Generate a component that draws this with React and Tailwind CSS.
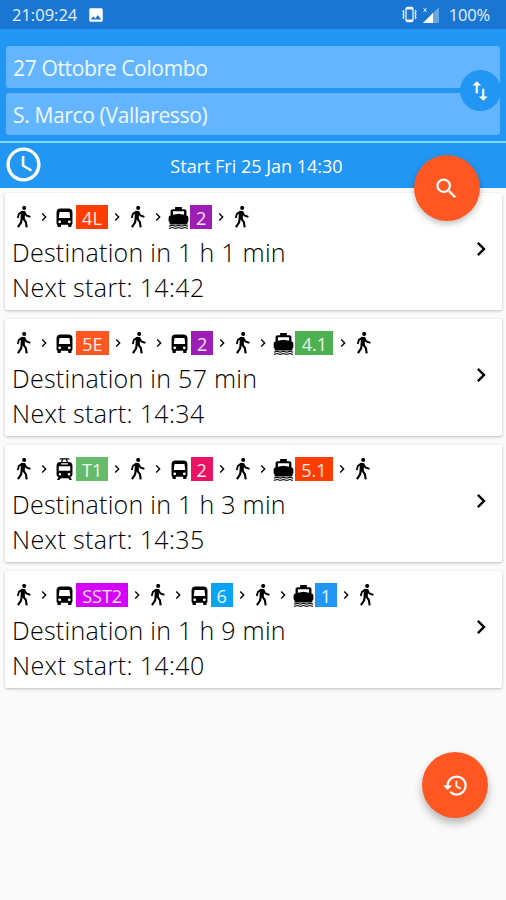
import React from "react";
import {
  MdAccessTime,
  MdChevronRight,
  MdHistory,
  MdImage,
  MdImportExport,
  MdSearch,
} from "react-icons/md";

const trips = [
  {
    duration: "1 h 1 min",
    start: "14:42",
    legs: [
      { type: "walk" },
      { type: "bus", line: "4L", style: "w-[31.5px] bg-[#ff3d00]" },
      { type: "walk" },
      { type: "boat", line: "2", style: "w-[22px] bg-[#9c1eb4]" },
      { type: "walk" },
    ],
  },
  {
    duration: "57 min",
    start: "14:34",
    legs: [
      { type: "walk" },
      { type: "bus", line: "5E", style: "w-[32.5px] bg-[#ff5722]" },
      { type: "walk" },
      { type: "bus", line: "2", style: "w-[22px] bg-[#9c1eb4]" },
      { type: "walk" },
      { type: "boat", line: "4.1", style: "w-[38px] bg-[#4caf50]" },
      { type: "walk" },
    ],
  },
  {
    duration: "1 h 3 min",
    start: "14:35",
    legs: [
      { type: "walk" },
      { type: "tram", line: "T1", style: "w-[32px] bg-[#66bb6a]" },
      { type: "walk" },
      { type: "bus", line: "2", style: "w-[22px] bg-[#e91263]" },
      { type: "walk" },
      { type: "boat", line: "5.1", style: "w-[38px] bg-[#ff3d00]" },
      { type: "walk" },
    ],
  },
  {
    duration: "1 h 9 min",
    start: "14:40",
    legs: [
      { type: "walk" },
      { type: "bus", line: "SST2", style: "w-[52px] bg-[#d500f9]" },
      { type: "walk" },
      { type: "bus", line: "6", style: "w-[22px] bg-[#08a5f2]" },
      { type: "walk" },
      { type: "boat", line: "1", style: "w-[22px] bg-[#2196f3]" },
      { type: "walk" },
    ],
  },
];

function WalkIcon({ className }) {
  return (
    <svg viewBox="0 0 24 24" className={className} fill="none" stroke="currentColor">
      <circle cx="12.7" cy="2" r="2.1" fill="currentColor" stroke="none" />
      <path d="M11.5 5.2 11.1 13.8" strokeWidth="4.4" />
      <path d="M11.3 5.6 7.2 8.2 6 12.4" strokeWidth="1.9" />
      <path d="M12.8 6 15 9.8 19.2 11.4" strokeWidth="1.9" />
      <path d="M10.3 13 9.4 17.2 6.2 22" strokeWidth="2.2" />
      <path d="M11.9 13.2 14.5 16.8 15.3 22.4" strokeWidth="2.2" />
    </svg>
  );
}

function BusIcon({ className }) {
  return (
    <svg viewBox="0 0 24 24" className={className} fill="currentColor">
      <path
        fillRule="evenodd"
        d="M8 2.5h8c3 0 4.3 1.4 4.3 4V18c0 .8-.4 1.4-1 1.8V21c0 .6-.4 1-1 1h-1.500c-.6 0-1-.4-1-1v-1.500H8.200V21c0 .6-.4 1-1 1H5.700c-.6 0-1-.4-1-1v-1.200c-.6-.4-1-1-1-1.800V6.500c0-2.600 1.300-4 4.300-4zM6.800 6.200 6 12.400h12l-.8-6.200zM7 15a1.500 1.500 0 1 0 0 3 1.500 1.500 0 0 0 0-3zM17 15a1.500 1.500 0 1 0 0 3 1.500 1.500 0 0 0 0-3z"
      />
    </svg>
  );
}

function TramIcon({ className }) {
  return (
    <svg viewBox="0 0 24 24" className={className} fill="currentColor">
      <path d="M7 1h10M10.200 1 8.800 4.800M13.800 1l1.400 3.800" stroke="currentColor" strokeWidth="1.3" />
      <path
        fillRule="evenodd"
        d="M8 4.200h8c3 0 4.300 1.400 4.300 4V17c0 1.600-.9 2.600-2.200 2.900l1.700 3h-2.400L16 21H8l-1.400 1.900H4.200l1.700-3C4.600 19.600 3.700 18.600 3.700 17V8.200c0-2.600 1.300-4 4.300-4zM8.500 5.600v1.300h7V5.600zM6 8.600v4.800h12V8.600zM7.300 15.700a1.300 1.300 0 1 0 0 2.600 1.300 1.300 0 0 0 0-2.600zM16.700 15.700a1.300 1.300 0 1 0 0 2.600 1.300 1.300 0 0 0 0-2.600z"
      />
    </svg>
  );
}

function BoatIcon({ className }) {
  return (
    <svg viewBox="0 0 24 24" className={className} fill="currentColor">
      <path
        fillRule="evenodd"
        d="M8.500 1h7v2.400H18c1.500 0 2.300.8 2.300 2.200V10c1.400.4 2 1.200 2 2.500V15c0 1-.3 1.600-1 2.200v2H2.700v-2c-.7-.6-1-1.200-1-2.200v-2.500c0-1.300.6-2.100 2-2.500V5.600C3.700 4.200 4.500 3.400 6 3.400h2.500zM6.200 5.600v3.400L12 8.200l5.800.8V5.600z"
      />
      <path
        d="M2 21c1.700 0 1.700-.8 3.400-.8s1.700.8 3.300.8 1.700-.8 3.300-.8 1.700.8 3.300.8 1.700-.8 3.300-.8 1.700.8 3.400.8M2 23.300c1.700 0 1.700-.8 3.400-.8s1.700.8 3.300.8 1.700-.8 3.300-.8 1.700.8 3.300.8 1.700-.8 3.300-.8 1.700.8 3.400.8"
        fill="none"
        stroke="currentColor"
        strokeWidth="1.1"
      />
    </svg>
  );
}

const legIcons = {
  walk: WalkIcon,
  bus: BusIcon,
  boat: BoatIcon,
  tram: TramIcon,
};

function StatusBar() {
  return (
    <div className="flex h-[29px] items-center bg-[#1976d2] pr-4 pl-3 text-[16.5px] text-white/90">
      <span className="w-[75px] pt-px">21:09:24</span>
      <MdImage className="size-[18px] text-white" />
      <svg
        viewBox="0 0 17 17"
        className="ml-auto size-[17px]"
        fill="none"
        stroke="currentColor"
        strokeWidth="1.3"
      >
        <rect x="5" y="1.5" width="7" height="14" rx="1.5" />
        <path d="M5 2.5h7M5 14.5h7" strokeWidth="1.8" />
        <path d="M3 4 2 5.500l1 1.500-1 1.500 1 1.500-1 1.500 1 1.500M14 4l1 1.500-1 1.500 1 1.500-1 1.500 1 1.500-1 1.500" />
      </svg>
      <svg viewBox="0 0 16 16" className="mt-px ml-[5px] size-4">
        <path d="M0 16 16 0v16z" fill="white" fillOpacity="0.35" />
        <path d="M0 16 10 6v10z" fill="white" />
        <path d="M0.5 1l3 4M3.500 1l-3 4" stroke="white" strokeOpacity="0.8" />
      </svg>
      <span className="ml-[10px] pt-px tracking-[-0.2px]">100%</span>
    </div>
  );
}

function SearchFields() {
  return (
    <div className="relative flex h-28 flex-col gap-[5px] px-[6px] pt-[17px] text-[21px] tracking-[-0.35px] text-white/90">
      <div className="flex h-[42px] items-center rounded-[3px] bg-[#64b5ff] pt-[3px] pl-[7px]">
        27 Ottobre Colombo
      </div>
      <div className="flex h-[42px] items-center rounded-[3px] bg-[#64b5ff] pt-[3px] pl-[7px]">
        S. Marco (Vallaresso)
      </div>
      <button className="absolute top-[41px] right-[5px] flex size-[41px] items-center justify-center rounded-full bg-[#2196f3] pr-0.5 text-white">
        <MdImportExport className="size-[26px]" />
      </button>
    </div>
  );
}

function TimeBar() {
  return (
    <div className="relative flex h-[47px] items-center justify-center border-t-2 border-[#7fd6ff] bg-[#2196f3] text-lg text-white">
      <MdAccessTime className="absolute top-[1px] left-[3px] size-[41px]" />
      <span className="pl-[7px]">Start Fri 25 Jan 14:30</span>
      <button className="absolute top-[12px] right-[26px] z-10 flex size-[66px] items-center justify-center rounded-full bg-[#ff5722] pr-0.5 shadow-[0_3px_6px_rgba(0,0,0,0.25)]">
        <MdSearch className="size-[27px]" />
      </button>
    </div>
  );
}

function Leg({ leg, last }) {
  const Icon = legIcons[leg.type];

  return (
    <>
      <Icon className="size-[23px] shrink-0" />
      {leg.line && (
        <span
          className={`flex h-6 shrink-0 items-center justify-center pt-px text-lg text-white/90 ${leg.style}`}
        >
          {leg.line}
        </span>
      )}
      {!last && <MdChevronRight className="mx-[1.1px] size-4 shrink-0" />}
    </>
  );
}

function TripCard({ trip }) {
  return (
    <div className="flex h-[117px] items-center rounded-[2px] bg-white pl-[7px] shadow-[0_1px_3px_rgba(0,0,0,0.25)]">
      <div className="flex-1 self-start pt-3">
        <div className="flex h-6 items-center">
          {trip.legs.map((leg, i) => (
            <Leg key={i} leg={leg} last={i === trip.legs.length - 1} />
          ))}
        </div>
        <p className="h-[35px] text-[25px] leading-[47px] font-light tracking-[0.28px]">
          Destination in {trip.duration}
        </p>
        <p className="h-[35px] text-[25px] leading-[47px] font-light tracking-[0.4px]">
          Next start: {trip.start}
        </p>
      </div>
      <MdChevronRight className="mr-[7px] mb-[6px] size-7" />
    </div>
  );
}

function App() {
  return (
    <div className="relative h-[900px] w-[506px] overflow-hidden bg-[#fafafa] font-['Open_Sans',sans-serif] text-black">
      <header className="bg-[#2196f3]">
        <StatusBar />
        <SearchFields />
        <TimeBar />
      </header>
      <main className="flex flex-col gap-[9px] pt-[5px] pr-1 pl-[5px]">
        {trips.map((trip) => (
          <TripCard key={trip.start} trip={trip} />
        ))}
      </main>
      <button className="absolute right-[18px] bottom-[82px] flex size-[66px] items-center justify-center rounded-full bg-[#ff5722] text-white shadow-[0_5px_9px_rgba(0,0,0,0.28)]">
        <MdHistory className="size-[27px]" />
      </button>
    </div>
  );
}

export default App;
